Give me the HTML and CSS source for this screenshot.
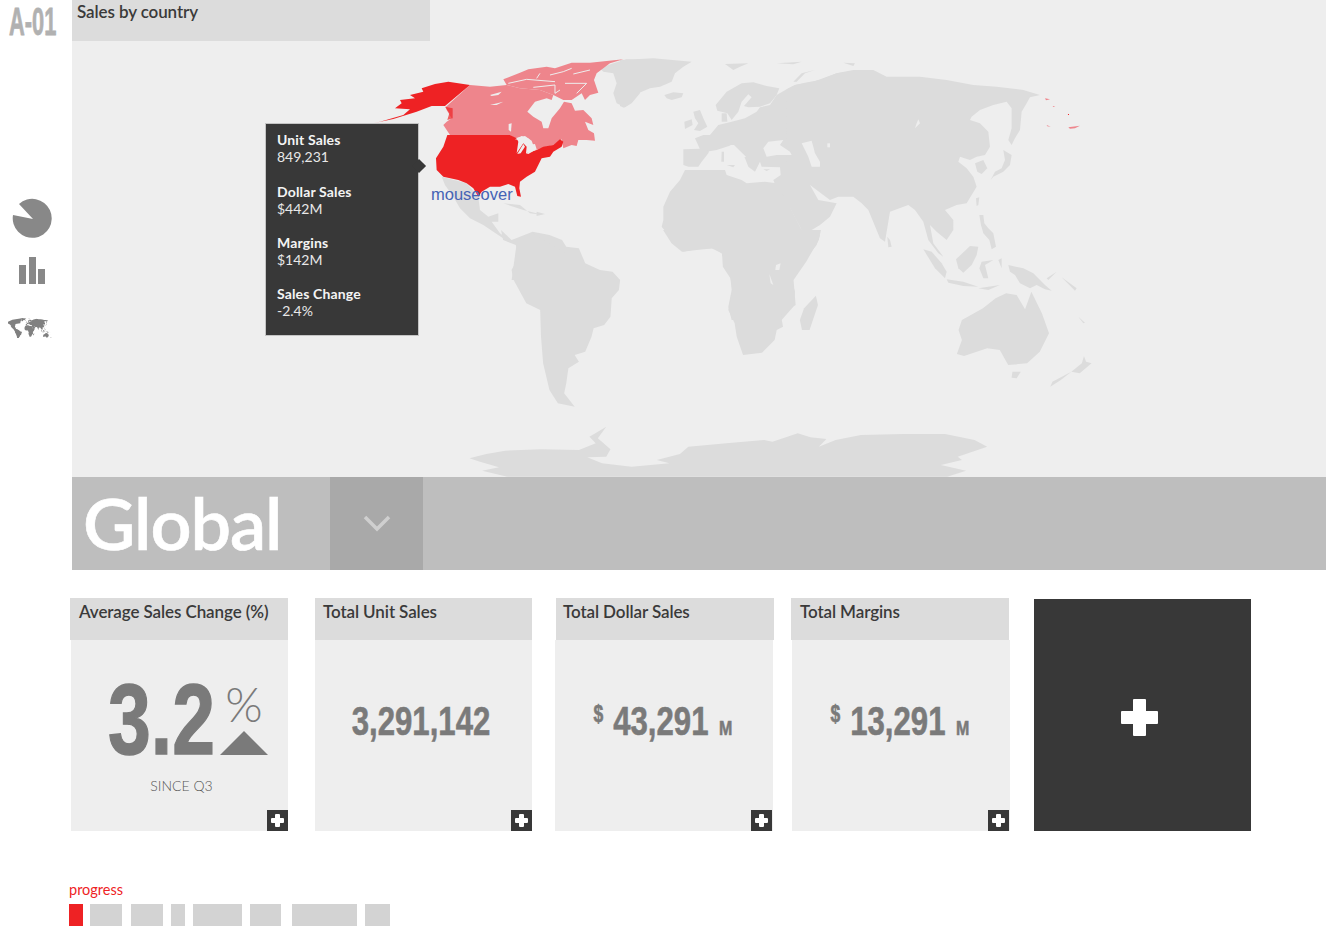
FILE: index.html
```html
<!DOCTYPE html>
<html lang="en">
<head>
<meta charset="UTF-8">
<meta name="viewport" content="width=device-width, initial-scale=1.0">
<title>Sales by country</title>
<link rel="stylesheet" href="styles.css">
</head>
<body>

<div class="app">
    <div class="sidebar">
        <div class="logo"><span>A-01</span></div>
        <svg class="nav-pie" width="40" height="40" viewBox="12 198 40 40"><path d="M33 219 L13 215 A19.5 19.5 0 1 0 19 204 Z"/></svg>
        <svg class="nav-bars" width="28" height="28" viewBox="18 257 28 28"><rect x="19" y="265" width="7" height="19"/><rect x="29" y="257" width="7" height="27"/><rect x="38" y="269" width="7" height="15"/></svg>
        <svg class="nav-world" width="44" height="20" viewBox="400 55 700 318"><path d="M375 125 L470 82 L620 60 L600 110 L595 140 L520 150 L510 195 L560 280 L620 285 L580 350 L560 400 L540 340 L510 270 L460 190 L430 160 Z"/><use href="#land"/></svg>
    </div>

    <div class="main">
        <div class="map-panel">
            <svg class="world-map" width="1254" height="477" viewBox="72 0 1254 477">
                <g id="land">
                    <!-- greenland, iceland, arctic bits -->
                    <g transform="translate(620 50) scale(.3333)">
                        <path d="M0 30 L100 25 L215 35 L190 50 L165 70 L155 95 L120 110 L90 115 L55 130 L30 160 L12 173 L0 168 Z"/>
                        <path d="M133 135 L160 127 L190 130 L185 142 L155 150 L140 145 Z"/>
                        <path d="M315 42 L385 40 L360 50 L340 60 Z"/>
                        <path d="M470 40 L545 35 L520 43 Z"/>
                        <path d="M670 38 L705 40 L700 48 Z"/>
                        <!-- britain, ireland -->
                        <path d="M220 185 L240 180 L250 205 L262 230 L240 243 L222 240 L235 220 L225 205 Z"/>
                        <path d="M193 215 L215 208 L218 225 L195 237 Z"/>
                        <!-- iberia -->
                        <path d="M190 298 L240 296 L268 300 L265 310 L245 335 L235 350 L205 350 L190 345 Z"/>
                        <!-- scandinavia -->
                        <path d="M287 165 L320 125 L365 100 L400 97 L440 108 L478 115 L470 135 L450 160 L420 170 L385 172 L372 168 L395 142 L385 133 L365 155 L355 185 L335 210 L322 190 L292 182 Z"/>
                        <path d="M305 190 L320 190 L322 215 L305 215 Z"/>
                        <!-- europe and west russia -->
                        <path d="M240 298 L225 265 L250 255 L270 255 L295 225 L335 215 L375 205 L410 185 L420 172 L450 165 L470 135 L500 118 L525 105 L580 95 L650 70 L720 60 L720 400 L520 400 L483 385 L480 352 L425 350 L420 335 L405 365 L385 350 L375 325 L350 300 L335 285 L320 290 L290 300 L268 304 Z"/>
                        <path d="M305 305 L312 305 L312 335 L304 335 Z"/>
                        <path d="M320 345 L345 345 L340 352 Z"/>
                        <path d="M430 358 L450 358 L440 363 Z"/>
                    </g>
                    <!-- asia -->
                    <g transform="translate(740 40) scale(.3333)">
                        <path d="M140 148 L165 135 L195 128 L240 120 L290 100 L340 90 L400 90 L440 110 L540 110 L620 120 L700 135 L770 140 L850 150 L900 165 L870 172 L860 190 L845 215 L840 270 L825 295 L815 315 L805 300 L815 265 L815 205 L800 185 L760 195 L720 210 L695 230 L690 240 L720 250 L745 275 L750 320 L735 345 L710 350 L690 360 L660 350 L655 365 L680 385 L700 410 L710 440 L680 490 L650 495 L615 510 L640 540 L640 570 L620 600 L590 575 L570 555 L580 610 L610 650 L595 640 L565 600 L550 545 L525 510 L505 495 L450 515 L435 605 L420 595 L385 510 L365 490 L340 470 L295 470 L270 480 L250 465 L230 450 L210 435 L235 480 L290 490 L270 530 L240 555 L190 585 L180 560 L150 505 L110 445 L100 420 L130 400 L140 380 Z"/>
                        <path d="M160 125 L185 100 L225 90 L195 100 L170 125 Z"/>
                        <path d="M705 370 L730 360 L742 385 L725 402 L712 395 Z"/>
                        <path d="M790 330 L815 345 L810 375 L790 395 L760 410 L752 420 L765 395 L785 385 L795 360 Z"/>
                        <path d="M708 475 L718 472 L715 495 L710 498 Z"/>
                        <path d="M442 590 L450 600 L455 620 L445 622 Z"/>
                    </g>
                    <!-- south east asia -->
                    <g transform="translate(920 200) scale(.3333)">
                        <path d="M178 45 L190 45 L193 70 L205 85 L220 100 L228 140 L215 148 L208 120 L190 100 L183 75 Z"/>
                        <path d="M108 178 L150 138 L175 140 L170 165 L155 195 L130 218 L115 205 Z"/>
                        <path d="M10 148 L35 155 L65 190 L80 215 L75 235 L45 205 Z"/>
                        <path d="M80 238 L130 245 L175 260 L130 258 L85 248 Z"/>
                        <path d="M185 185 L220 180 L195 195 L205 235 L190 235 L178 205 Z"/>
                        <path d="M265 195 L310 205 L340 220 L375 255 L395 272 L375 268 L350 255 L330 265 L300 250 L285 225 L270 215 Z"/>
                        <path d="M175 265 L240 255 L205 270 Z"/>
                        <path d="M235 180 L245 175 L245 205 Z"/>
                        <path d="M380 235 L410 215 L385 240 Z"/>
                        <path d="M425 232 L470 265 L465 272 Z"/>
                        <path d="M475 350 L495 368 L490 370 Z"/>
                    </g>
                    <!-- africa north, madagascar etc -->
                    <g transform="translate(650 170) scale(.3333)">
                        <path d="M105 0 L90 30 L60 65 L40 110 L40 150 L35 170 L60 200 L75 225 L100 245 L140 237 L185 235 L215 250 L225 280 L240 310 L245 360 L235 410 L245 450 L395 450 L430 410 L435 365 L425 330 L455 280 L500 225 L510 195 L465 197 L455 180 L440 150 L400 75 L385 55 L380 40 L345 35 L290 40 L275 30 L230 15 L225 0 Z"/>
                    </g>
                    <g transform="translate(440 230) scale(.4209 .3333)">
                        <!-- south america -->
                        <path d="M145 0 L170 30 L190 20 L220 5 L260 15 L290 30 L300 50 L330 55 L345 100 L380 120 L410 125 L428 150 L425 180 L408 205 L405 260 L390 285 L365 295 L360 320 L345 365 L320 375 L330 395 L305 415 L300 460 L295 490 L320 530 L280 520 L260 480 L245 400 L240 320 L238 240 L205 220 L175 150 L170 120 L190 75 L180 45 L150 30 Z"/>
                        <!-- africa south -->
                        <path d="M530 0 L550 40 L575 65 L610 60 L650 55 L670 70 L672 110 L690 145 L695 180 L685 240 L700 280 L705 320 L720 375 L765 368 L795 330 L800 300 L815 290 L810 255 L845 225 L840 150 L870 95 L900 30 L905 0 Z"/>
                        <path d="M893 197 L898 225 L878 300 L860 300 L855 270 L865 235 Z"/>
                        <!-- australia, nz -->
                        <path d="M1240 270 L1290 235 L1320 205 L1345 190 L1370 195 L1390 238 L1405 185 L1430 250 L1447 310 L1425 365 L1395 400 L1350 405 L1330 360 L1300 355 L1245 378 L1228 372 L1240 330 L1232 300 Z"/>
                        <path d="M1360 425 L1380 425 L1370 445 L1358 443 Z"/>
                        <path d="M1530 378 L1535 395 L1548 400 L1520 430 L1500 425 L1525 400 Z"/>
                        <path d="M1500 425 L1475 450 L1450 470 L1455 455 Z"/>
                        <!-- antarctica -->
                        <path d="M70 685 L110 672 L155 662 L240 658 L330 660 L370 640 L355 620 L395 590 L375 625 L405 658 L395 680 L350 682 L385 700 L455 710 L545 700 L515 690 L570 672 L590 650 L680 640 L770 630 L790 635 L850 610 L880 622 L918 627 L900 650 L940 630 L1000 615 L1100 612 L1200 612 L1270 630 L1300 650 L1230 680 L1240 690 L1190 705 L1250 722 L1205 740 L160 740 L100 722 L140 712 L95 695 Z"/>
                    </g>
                    <!-- mexico, central america, caribbean, top of south america -->
                    <g transform="translate(360 40) scale(.3333)">
                        <path d="M245 410 L320 430 L355 470 L360 510 L385 530 L415 520 L415 545 L395 545 L420 580 L460 610 L445 605 L400 575 L370 555 L330 535 L300 505 L280 470 L255 435 Z"/>
                        <path d="M430 490 L480 495 L510 520 L550 525 L490 510 Z"/>
                        <path d="M530 515 L555 522 L530 528 Z"/>
                        <path d="M455 720 L470 610 L520 580 L620 640 L680 680 L690 720 Z"/>
                    </g>
                    <!-- greenland west side -->
                    <g transform="translate(440 50) scale(.3333)">
                        <path d="M480 55 L520 40 L560 28 L600 30 L600 130 L575 160 L555 172 L530 160 L520 130 L530 100 L520 70 L490 65 Z"/>
                    </g>
                </g>

                <!-- inland water -->
                <g class="water">
                    <g transform="translate(620 50) scale(.3333)">
                        <path d="M430 295 L445 275 L490 270 L480 285 L510 305 L515 315 L470 315 L440 320 Z"/>
                        <path d="M545 280 L575 272 L580 290 L585 310 L600 335 L600 350 L575 350 L565 320 L555 300 Z"/>
                        <path d="M330 285 L342 285 L378 320 L370 325 Z"/>
                        <path d="M622 280 L630 280 L630 292 L622 292 Z"/>
                    </g>
                    <g transform="translate(740 40) scale(.3333)">
                        <path d="M535 238 L540 250 L525 265 L530 250 Z"/>
                    </g>
                    <g transform="translate(650 170) scale(.3333)">
                        <path d="M378 285 L392 280 L388 300 L376 300 Z"/>
                        <path d="M358 312 L370 345 L362 340 Z"/>
                    </g>
                </g>

                <!-- highlighted countries -->
                <g transform="translate(440 50) scale(.3333)" class="canada">
                    <path d="M90 105 L18 170 L20 180 L35 205 L20 215 L10 225 L30 255 L210 255 L225 265 L255 258 L275 272 L285 300 L340 285 L365 268 L370 295 L395 285 L410 288 L415 270 L440 270 L465 272 L462 250 L445 240 L435 215 L460 225 L455 205 L440 190 L430 180 L405 182 L395 160 L372 155 L360 175 L335 205 L325 235 L310 235 L305 215 L280 200 L262 185 L285 155 L320 145 L335 150 L340 135 L300 120 L240 115 L200 105 L150 110 Z"/>
                    <path d="M190 88 L240 68 L265 58 L320 50 L345 55 L395 38 L450 38 L550 28 L510 40 L490 55 L470 70 L462 90 L475 128 L450 135 L435 150 L425 130 L395 150 L370 150 L340 135 L300 120 L240 115 L200 105 Z"/>
                </g>
                <g transform="translate(440 50) scale(.3333)" class="water">
                    <path d="M150 135 L185 125 L175 135 L155 138 Z"/>
                    <path d="M150 165 L190 155 L170 165 Z"/>
                    <path d="M206 222 L215 220 L213 245 L206 240 Z"/>
                    <path class="channel" d="M205 100 L260 88 L345 95"/>
                    <path class="channel" d="M330 75 L370 65 L395 55"/>
                    <path class="channel" d="M280 112 L345 105 L345 130 L360 120"/>
                    <path class="channel" d="M375 100 L440 100 L410 130"/>
                    <path class="channel" d="M290 85 L300 70"/>
                    <path class="channel" d="M400 72 L450 60"/>
                </g>
                <g transform="translate(360 40) scale(.3333)" class="usa">
                    <path d="M330 135 L265 125 L225 132 L185 145 L190 155 L150 165 L165 175 L120 180 L125 190 L105 205 L150 208 L130 225 L60 245 L40 250 L100 237 L170 215 L215 198 L255 198 Z"/>
                    <path d="M255 200 L278 205 L278 235 L262 240 L268 220 Z" opacity=".7"/>
                    <path d="M262 285 L450 285 L470 295 L475 305 L470 340 L490 310 L500 320 L498 340 L530 330 L550 320 L580 315 L600 298 L610 305 L605 320 L580 335 L570 350 L545 355 L535 375 L525 395 L500 410 L480 425 L478 445 L483 470 L472 468 L465 440 L445 432 L420 440 L390 440 L365 455 L355 470 L340 445 L320 430 L295 420 L250 410 L230 390 L228 355 L250 320 Z"/>
                </g>
                <g transform="translate(440 50) scale(.3333)" class="water">
                    <path d="M225 268 L245 258 L270 268 L250 272 Z"/>
                    <path d="M232 312 L250 282 L255 290 L242 310 Z"/>
                    <path d="M262 285 L285 282 L290 298 L265 312 L258 310 L282 298 Z"/>
                </g>
                <!-- far end of the aleutians -->
                <g transform="translate(740 40) scale(.3333)" class="canada">
                    <path d="M915 175 L930 178 L918 181 Z"/>
                    <path d="M938 198 L946 199 L940 201 Z"/>
                    <path d="M920 255 L932 260 L922 259 Z"/>
                    <path d="M985 262 L1020 257 L1005 265 L990 266 Z"/>
                </g>
                <g transform="translate(740 40) scale(.3333)" class="usa">
                    <rect x="984" y="222" width="3" height="3"/>
                </g>
            </svg>

            <div class="map-tab">Sales by country</div>

            <div class="tooltip">
                <div class="tip-item"><strong>Unit Sales</strong><br>849,231</div>
                <div class="tip-item"><strong>Dollar Sales</strong><br>$442M</div>
                <div class="tip-item"><strong>Margins</strong><br>$142M</div>
                <div class="tip-item"><strong>Sales Change</strong><br>-2.4%</div>
            </div>
            <div class="mouse-note">mouseover</div>
        </div>

        <div class="region-bar">
            <div class="region-name">Global</div>
            <div class="region-drop">
                <svg width="28" height="17" viewBox="0 0 28 17"><path d="M2 2 L14 14 L26 2" fill="none" stroke="#cfcfcf" stroke-width="3.5"/></svg>
            </div>
        </div>

        <div class="cards">
            <div class="card card-first">
                <div class="card-head">Average Sales Change (%)</div>
                <div class="card-body">
                    <div class="change">
                        <span class="change-num">3.2</span>
                        <span class="change-side">
                            <span class="change-pct">%</span>
                            <span class="change-up"></span>
                        </span>
                    </div>
                    <div class="since">SINCE Q3</div>
                </div>
                <div class="plus-btn"><span class="cross"></span></div>
            </div>

            <div class="card card-second">
                <div class="card-head">Total Unit Sales</div>
                <div class="card-body">
                    <div class="stat">3,291,142</div>
                </div>
                <div class="plus-btn"><span class="cross"></span></div>
            </div>

            <div class="card card-third">
                <div class="card-head">Total Dollar Sales</div>
                <div class="card-body">
                    <div class="stat"><span class="stat-cur">$</span><span>43,291</span><span class="stat-unit">M</span></div>
                </div>
                <div class="plus-btn"><span class="cross"></span></div>
            </div>

            <div class="card card-fourth">
                <div class="card-head">Total Margins</div>
                <div class="card-body">
                    <div class="stat"><span class="stat-cur">$</span><span>13,291</span><span class="stat-unit">M</span></div>
                </div>
                <div class="plus-btn"><span class="cross"></span></div>
            </div>

            <div class="add-card"><span class="cross-big"></span></div>
        </div>

        <div class="progress">
            <div class="progress-label">progress</div>
            <div class="progress-steps">
                <span class="step step-on w14"></span>
                <span class="step w32 gap7"></span>
                <span class="step w32 gap9"></span>
                <span class="step w14 gap8"></span>
                <span class="step w49 gap8"></span>
                <span class="step w31 gap8"></span>
                <span class="step w65 gap11"></span>
                <span class="step w25 gap8"></span>
            </div>
        </div>
    </div>
</div>

</body>
</html>
```

FILE: styles.css
```css
body {
    margin: 0;
    padding: 0;
    font-family: Lato, "Open Sans", sans-serif;
    background-color: #fff;
    color: #3a3a3a;
}
.app {
    display: flex;
    width: 1326px;
    height: 947px;
    overflow: hidden;
}
.sidebar {
    width: 72px;
    flex-shrink: 0;
    display: flex;
    flex-direction: column;
    align-items: flex-start;
}
.logo {
    width: 46px;
    height: 42px;
    margin-left: 9px;
    font-family: "Liberation Sans", sans-serif;
    font-weight: 700;
    font-size: 39px;
    line-height: 44px;
    color: #b1b1b1;
    white-space: nowrap;
    -webkit-text-stroke: .8px #b1b1b1;
}
.logo span {
    display: inline-block;
    transform: scaleX(.56);
    transform-origin: left center;
}
.nav-pie {
    margin: 156px 0 0 12px;
    fill: #888;
}
.nav-bars {
    margin: 19px 0 0 18px;
    fill: #888;
}
.nav-world {
    margin: 33px 0 0 8px;
    fill: #808080;
}
.main {
    width: 1254px;
}
.map-panel {
    position: relative;
    height: 477px;
    background-color: #eee;
}
.world-map {
    display: block;
    fill: #dcdcdc;
}
.water {
    fill: #eee;
}
.channel {
    fill: none;
    stroke: #eee;
    stroke-width: 3;
}
.canada {
    fill: #ee858c;
}
.usa {
    fill: #ee2224;
}
.map-tab {
    position: absolute;
    left: 0;
    top: 0;
    width: 353px;
    height: 41px;
    padding-left: 5px;
    background-color: #dcdcdc;
    font-size: 17px;
    font-weight: 600;
    letter-spacing: -.1px;
    line-height: 24px;
}
.tooltip {
    position: absolute;
    left: 193px;
    top: 123px;
    width: 141px;
    height: 199px;
    padding: 7px 0 5px 11px;
    background-color: #383838;
    border: 1px solid #c4c4c4;
    color: #e8e8e8;
    font-size: 14px;
    line-height: 17px;
}
.tooltip::after {
    content: "";
    position: absolute;
    right: -6px;
    top: 37px;
    width: 10px;
    height: 10px;
    background-color: #383838;
    transform: rotate(45deg);
}
.tip-item {
    margin-bottom: 17px;
}
.tip-item:first-child {
    margin-bottom: 18px;
}
.tip-item strong {
    color: #f4f4f4;
    letter-spacing: .15px;
}
.mouse-note {
    position: absolute;
    left: 359px;
    top: 184px;
    font-family: "Liberation Sans", Arial, sans-serif;
    font-size: 16.5px;
    line-height: 20px;
    color: #4563b5;
}
.region-bar {
    display: flex;
    height: 93px;
    background-color: #bebebe;
}
.region-name {
    width: 258px;
    box-sizing: border-box;
    padding-left: 11px;
    color: #fff;
    font-size: 72px;
    font-weight: 600;
    letter-spacing: -1.1px;
    line-height: 90px;
    -webkit-text-stroke: .6px #fff;
}
.region-drop {
    width: 93px;
    height: 94px;
    margin-top: -1px;
    background-color: #a9a9a9;
    display: flex;
    align-items: center;
    justify-content: center;
}
.cards {
    display: flex;
    margin-top: 28px;
    height: 233px;
}
.card {
    position: relative;
    width: 217px;
    flex-shrink: 0;
}
.card-first {
    margin-left: -1px;
}
.card-second {
    margin-left: 27px;
}
.card-third {
    width: 218px;
    margin-left: 23px;
}
.card-fourth {
    width: 218px;
    margin-left: 19px;
}
.card-head {
    height: 42px;
    margin-left: -1px;
    padding-left: 9px;
    background-color: #dcdcdc;
    font-size: 17px;
    font-weight: 600;
    letter-spacing: -.1px;
    line-height: 28px;
}
.card-second .card-head {
    margin-left: 0;
    padding-left: 8px;
}
.card-third .card-head {
    margin: 0 -1px 0 1px;
    padding-left: 7px;
}
.card-fourth .card-head {
    margin: 0 1px 0 -1px;
}
.card-body {
    height: 191px;
    box-sizing: border-box;
    padding-top: 59px;
    background-color: #eee;
    color: #7a7a7a;
    text-align: center;
}
.stat {
    display: flex;
    justify-content: center;
    align-items: baseline;
    margin-left: -2px;
    font-family: "Liberation Sans", sans-serif;
    font-weight: 700;
    font-size: 41px;
    line-height: 44px;
    white-space: nowrap;
    transform: scaleX(.76);
    -webkit-text-stroke: .6px #7a7a7a;
}
.card-second .stat {
    margin-left: -5px;
}
.stat-cur {
    align-self: flex-start;
    margin: 4px 13px 0 0;
    font-size: 23px;
    line-height: 23px;
}
.stat-unit {
    margin-left: 14px;
    font-size: 21px;
}
.card-first .card-body {
    padding-top: 27px;
}
.change {
    display: flex;
    margin-left: 37px;
    height: 100px;
}
.change-num {
    margin-right: -32px;
    font-family: "Liberation Sans", sans-serif;
    font-weight: 700;
    font-size: 100px;
    line-height: 104px;
    transform: scaleX(.77);
    transform-origin: left center;
    -webkit-text-stroke: 1.4px #7a7a7a;
}
.change-side {
    display: flex;
    flex-direction: column;
    align-items: center;
    width: 48px;
    margin-left: 5px;
}
.change-pct {
    height: 46px;
    margin-top: 12px;
    font-size: 48px;
    font-weight: 300;
    line-height: 50px;
}
.change-up {
    width: 0;
    height: 0;
    margin-top: 6px;
    border-left: 24px solid transparent;
    border-right: 24px solid transparent;
    border-bottom: 24px solid #7a7a7a;
}
.since {
    margin: 10px 0 0 4px;
    font-size: 14px;
    font-weight: 300;
    line-height: 18px;
    color: #555;
}
.plus-btn {
    position: absolute;
    right: 0;
    bottom: 0;
    width: 21px;
    height: 21px;
    background-color: #383838;
    display: flex;
    align-items: center;
    justify-content: center;
}
.card-third .plus-btn {
    right: 1px;
}
.card-fourth .plus-btn {
    right: 1px;
}
.cross {
    position: relative;
    width: 13px;
    height: 5px;
    border-radius: 1px;
    background-color: #fff;
}
.cross::after {
    content: "";
    position: absolute;
    left: 4px;
    top: -4px;
    width: 5px;
    height: 13px;
    border-radius: 1px;
    background-color: #fff;
}
.add-card {
    width: 217px;
    height: 232px;
    margin: 1px 0 0 24px;
    background-color: #383838;
    display: flex;
    align-items: center;
    justify-content: center;
}
.cross-big {
    position: relative;
    width: 37px;
    height: 13px;
    margin: 4px 6px 0 0;
    background-color: #fff;
    border-radius: 1px;
}
.cross-big::after {
    content: "";
    position: absolute;
    left: 12px;
    top: -12px;
    width: 13px;
    height: 37px;
    background-color: #fff;
    border-radius: 1px;
}
.progress {
    margin: 51px 0 0 -3px;
}
.progress-label {
    font-size: 14.5px;
    font-weight: 400;
    line-height: 16px;
    color: #ee2224;
}
.progress-steps {
    display: flex;
    margin-top: 6px;
}
.step {
    height: 22px;
    background-color: #d3d3d3;
}
.step-on {
    background-color: #ee2224;
}
.w14 { width: 14px; }
.w25 { width: 25px; }
.w31 { width: 31px; }
.w32 { width: 32px; }
.w49 { width: 49px; }
.w65 { width: 65px; }
.gap7 { margin-left: 7px; }
.gap8 { margin-left: 8px; }
.gap9 { margin-left: 9px; }
.gap11 { margin-left: 11px; }
```
